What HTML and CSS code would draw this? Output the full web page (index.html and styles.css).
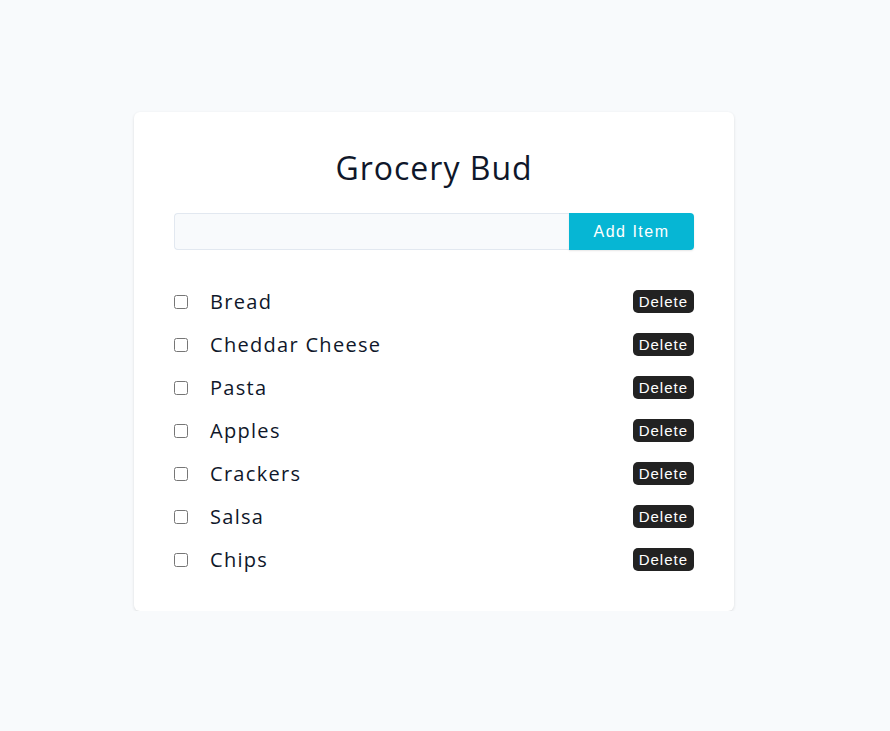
FILE: index.html
```html
<!DOCTYPE html>
<html lang="en">
<head>
<meta charset="utf-8">
<title>Grocery Bud</title>
<link rel="stylesheet" href="styles.css">
</head>
<body>
<main class="page">
  <section class="card">
    <h2 class="title">Grocery Bud</h2>
    <form class="add-form">
      <input class="add-input" type="text">
      <button class="add-btn" type="button">Add Item</button>
    </form>
    <ul class="items">
      <li class="item"><input type="checkbox" class="check"><span class="name">Bread</span><button class="del" type="button">Delete</button></li>
      <li class="item"><input type="checkbox" class="check"><span class="name">Cheddar Cheese</span><button class="del" type="button">Delete</button></li>
      <li class="item"><input type="checkbox" class="check"><span class="name">Pasta</span><button class="del" type="button">Delete</button></li>
      <li class="item"><input type="checkbox" class="check"><span class="name">Apples</span><button class="del" type="button">Delete</button></li>
      <li class="item"><input type="checkbox" class="check"><span class="name">Crackers</span><button class="del" type="button">Delete</button></li>
      <li class="item"><input type="checkbox" class="check"><span class="name">Salsa</span><button class="del" type="button">Delete</button></li>
      <li class="item"><input type="checkbox" class="check"><span class="name">Chips</span><button class="del" type="button">Delete</button></li>
    </ul>
  </section>
</main>
</body>
</html>
```
FILE: styles.css
```css
* { box-sizing: border-box; }
html, body { margin: 0; padding: 0; }
body {
  background: #f8fafc;
  font-family: "Open Sans", sans-serif;
  color: #0f172a;
}
.page {
  padding: 112px 22px 0 0;
  display: flex;
  justify-content: center;
}
.card {
  width: 600px;
  background: #fff;
  border-radius: 6px;
  box-shadow: 0 1px 3px rgba(0,0,0,0.12);
  padding: 36px 40px 30px;
}
.title {
  margin: 0 0 25px;
  text-align: center;
  font-size: 32px;
  font-weight: 400;
  line-height: 40px;
  letter-spacing: 1px;
}
.add-form {
  display: flex;
  height: 37px;
}
.add-input {
  flex: 1;
  margin: 0;
  background: #f8fafc;
  border: 1px solid #e2e8f0;
  border-right: none;
  border-radius: 4px 0 0 4px;
  padding: 0 8px;
}
.add-btn {
  width: 125px;
  margin: 0;
  border: none;
  background: #06b6d4;
  color: #fff;
  border-radius: 0 4px 4px 0;
  font-family: "Liberation Sans", Arial, sans-serif;
  font-size: 16px;
  letter-spacing: 1.5px;
  box-shadow: 0 1px 2px rgba(0,0,0,0.1);
}
.items {
  list-style: none;
  margin: 30px 0 0;
  padding: 0;
}
.item {
  display: flex;
  align-items: center;
  height: 43px;
}
.check {
  width: 14px;
  height: 14px;
  margin: 0;
}
.name {
  flex: 1;
  margin-left: 22px;
  font-size: 20px;
  letter-spacing: 1.3px;
}
.del {
  height: 23px;
  padding: 0 6px;
  border: none;
  border-radius: 5px;
  background: #222;
  color: #fff;
  font-family: "Liberation Sans", Arial, sans-serif;
  font-size: 15px;
  letter-spacing: 1px;
}
```
